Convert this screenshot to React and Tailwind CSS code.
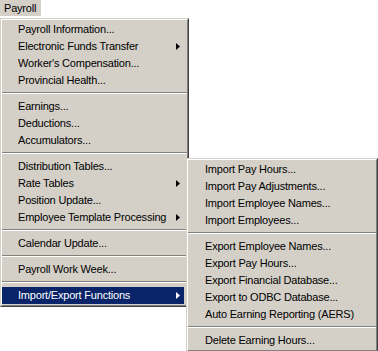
import React from "react";

const mainItems = [
  { t: "Payroll Information..." },
  { t: "Electronic Funds Transfer", sub: true },
  { t: "Worker's Compensation..." },
  { t: "Provincial Health..." },
  "sep",
  { t: "Earnings..." },
  { t: "Deductions..." },
  { t: "Accumulators..." },
  "sep",
  { t: "Distribution Tables..." },
  { t: "Rate Tables", sub: true },
  { t: "Position Update..." },
  { t: "Employee Template Processing", sub: true },
  "sep",
  { t: "Calendar Update..." },
  "sep",
  { t: "Payroll Work Week..." },
  "sep",
  { t: "Import/Export Functions", sub: true, active: true },
];

const subItems = [
  { t: "Import Pay Hours..." },
  { t: "Import Pay Adjustments..." },
  { t: "Import Employee Names..." },
  { t: "Import Employees..." },
  "sep",
  { t: "Export Employee Names..." },
  { t: "Export Pay Hours..." },
  { t: "Export Financial Database..." },
  { t: "Export to ODBC Database..." },
  { t: "Auto Earning Reporting (AERS)" },
  "sep",
  { t: "Delete Earning Hours..." },
];

function Arrow({ white }) {
  return (
    <svg width="4" height="7" viewBox="0 0 4 7" className="shrink-0">
      <polygon points="0,0 4,3.5 0,7" fill={white ? "#ffffff" : "#000000"} />
    </svg>
  );
}

function Separator() {
  return (
    <div className="h-[9px] pt-[3px]">
      <div className="h-px bg-[#808080]" />
      <div className="h-px bg-white" />
    </div>
  );
}

// win2k style raised menu frame
function MenuFrame({ className, children }) {
  return (
    <div
      className={
        "absolute bg-[#d4d0c8] border border-[#d4d0c8] border-r-[#404040] border-b-[#404040] " +
        className
      }
    >
      <div className="border border-white border-r-[#808080] border-b-[#808080] py-[1px]">
        {children}
      </div>
    </div>
  );
}

function MenuList({ items, textPad }) {
  return items.map((it, i) =>
    it === "sep" ? (
      <Separator key={i} />
    ) : (
      <div
        key={i}
        className={
          "h-[17px] mr-[3px] flex items-center justify-between pr-[4px] " +
          (it.active ? "bg-[#0a246a] text-white" : "text-black")
        }
        style={{ paddingLeft: textPad }}
      >
        <span className="whitespace-nowrap pb-px">{it.t}</span>
        {it.sub && <Arrow white={it.active} />}
      </div>
    )
  );
}

export default function App() {
  return (
    <div
      className="relative w-[378px] h-[351px] bg-white overflow-hidden text-[11px] leading-none tracking-[-0.2px]"
      style={{ fontFamily: "'Liberation Sans', Arial, sans-serif" }}
    >
      <div className="h-[16px] w-[41px] bg-[#d4d0c8] flex items-center pl-[4px] text-black">
        Payroll
      </div>

      <MenuFrame className="left-0 top-[18px] w-[189px]">
        <MenuList items={mainItems} textPad={16} />
      </MenuFrame>

      <MenuFrame className="left-[186px] top-[158px] w-[192px]">
        <MenuList items={subItems} textPad={17} />
      </MenuFrame>
    </div>
  );
}
